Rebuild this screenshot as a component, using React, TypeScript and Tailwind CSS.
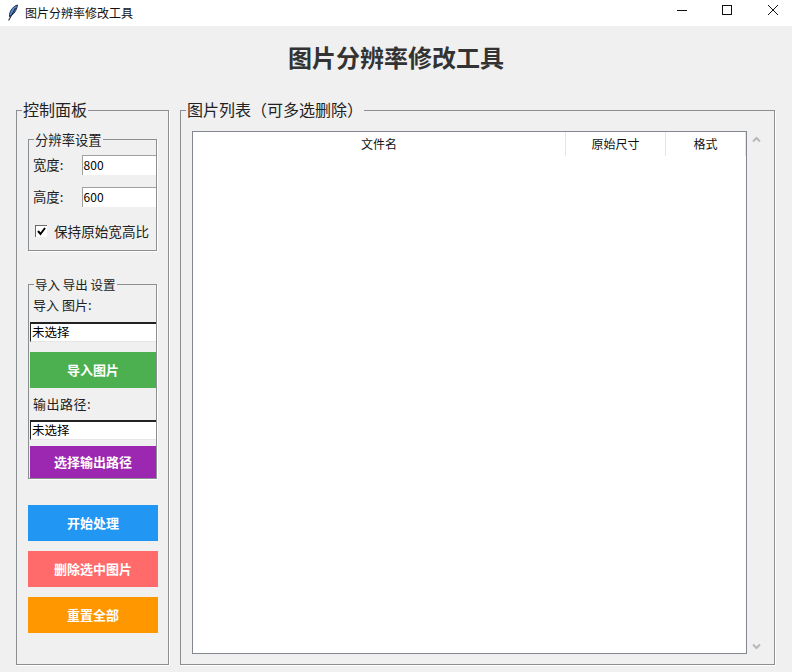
const font = { fontFamily: '"Noto Sans CJK SC", "Liberation Sans", sans-serif' };

function Group({ title, className, legendClass, children }: { title: string; className: string; legendClass: string; children: React.ReactNode }) {
  return (
    <div className={`relative border border-[#8c8f92] shadow-[1px_1px_0_#ffffff] ${className}`}>
      <span className={`absolute whitespace-nowrap bg-[#f0f0f0] px-px ${legendClass}`}>{title}</span>
      {children}
    </div>
  );
}

function Field({ value, className }: { value: string; className: string }) {
  return <div className={`bg-white text-black ${className}`}>{value}</div>;
}

function Action({ label, className }: { label: string; className: string }) {
  return <div className={`flex items-center justify-center font-bold text-[13px] text-white ${className}`}>{label}</div>;
}

export default function App() {
  return (
    <div style={font} className="flex h-[672px] w-[792px] flex-col overflow-hidden bg-[#f0f0f0] text-[#222222]">
      <div className="flex h-[26px] items-center bg-white pl-[7px] text-[12px] text-[#111111]">
        <svg width="12" height="18" viewBox="0 0 12 18" className="mr-[6px]">
          <path d="M10.5 1C6.5 2.2 3.2 6 2.6 10.4L2.4 12.6L4.8 11.2C7.8 9 10 5 10.5 1Z" fill="#5b8fd6" stroke="#1c2a44" strokeWidth="1" />
          <path d="M8.5 4L1.6 16.5" stroke="#1c2a44" strokeWidth="1.1" fill="none" />
        </svg>
        <span>图片分辨率修改工具</span>
        <div className="ml-auto flex h-full items-center">
          <svg width="46" height="26" viewBox="0 0 46 26"><path d="M18 10.5H28" stroke="#111" fill="none" /></svg>
          <svg width="46" height="26" viewBox="0 0 46 26"><rect x="17.5" y="5.5" width="9" height="9" stroke="#111" fill="none" /></svg>
          <svg width="41" height="26" viewBox="0 0 41 26"><path d="M17 5L27 15M27 5L17 15" stroke="#111" fill="none" /></svg>
        </div>
      </div>

      <div className="h-[84px] pt-[13px] text-center text-[24px] font-bold leading-[36px] text-[#333333]">图片分辨率修改工具</div>

      <div className="flex h-[555px] gap-[11px] pl-4">
        <Group title="控制面板" legendClass="left-[5px] top-[-13px] text-[16px] leading-[22px]" className="h-[555px] w-[153px] pl-[11px] pt-[28px]">
          <Group title="分辨率设置" legendClass="left-[5px] top-[-8px] text-[13.33px] leading-[16px]" className="h-[112px] w-[129px] pl-1 pt-[15px] text-[13.33px]">
            <div className="flex h-5 items-center">
              <span className="w-[49px] leading-5">宽度:</span>
              <Field value="800" className="h-5 w-[75px] border-l border-t border-[#a0a0a0] pl-px text-[12px] leading-[17px]" />
            </div>
            <div className="mt-3 flex h-5 items-center">
              <span className="w-[49px] leading-5">高度:</span>
              <Field value="600" className="h-5 w-[75px] border-l border-t border-[#a0a0a0] pl-px text-[12px] leading-[17px]" />
            </div>
            <div className="ml-[2px] mt-[17px] flex h-[14px] items-center gap-[7px]">
              <span className="flex h-3 w-3 items-center justify-center border-l border-t border-[#696969] bg-white">
                <svg width="9" height="9" viewBox="0 0 9 9"><path d="M1 4L3.5 7L8 1" stroke="#000" strokeWidth="2" fill="none" /></svg>
              </span>
              <span className="whitespace-nowrap text-[13.6px] leading-4">保持原始宽高比</span>
            </div>
          </Group>

          <Group title="导入 导出 设置" legendClass="left-[5px] top-[-8px] text-[12.5px] leading-[16px]" className="mt-[33px] h-[195px] w-[129px] pl-px pt-[10px] text-[13px]">
            <div className="pl-[3px] leading-5">导入 图片:</div>
            <Field value="未选择" className="mt-[7px] h-5 w-[126px] border-l border-t-2 border-[#222222] border-b border-b-[#e6e6e6] pl-px text-[12.5px] leading-[16px]" />
            <Action label="导入图片" className="mt-[10px] h-9 w-[126px] bg-[#4caf50]" />
            <div className="mt-[6px] pl-[3px] leading-5 tracking-[0.5px]">输出路径:</div>
            <Field value="未选择" className="mt-[6px] h-5 w-[126px] border-l border-t-2 border-[#222222] border-b border-b-[#e6e6e6] pl-px text-[12.5px] leading-[16px]" />
            <Action label="选择输出路径" className="mt-[6px] h-[32px] w-[126px] bg-[#9c27b0]" />
          </Group>

          <div className="mt-[26px] flex w-[130px] flex-col gap-[10px]">
            <Action label="开始处理" className="h-9 bg-[#2196f3]" />
            <Action label="删除选中图片" className="h-9 bg-[#ff6b6b]" />
            <Action label="重置全部" className="h-9 bg-[#ff9800]" />
          </div>
        </Group>

        <Group title="图片列表（可多选删除）" legendClass="left-[5px] top-[-13px] text-[16px] leading-[22px]" className="flex h-[555px] w-[595px] pl-[11px] pt-[20px]">
          <div className="h-[523px] w-[555px] border border-[#828790] bg-white">
            <div className="flex h-6 text-[12px] leading-[23px] text-[#111111]">
              <div className="w-[373px] border-r border-[#e5e5e5] text-center">文件名</div>
              <div className="w-[100px] border-r border-[#e5e5e5] text-center">原始尺寸</div>
              <div className="w-[80px] border-r border-[#e5e5e5] text-center">格式</div>
            </div>
          </div>
          <div className="flex h-[523px] w-[18px] flex-col items-center justify-between pb-[4px] pl-px pt-[5px]">
            <svg width="9" height="7" viewBox="0 0 9 7"><path d="M1 5.5L4.5 2L8 5.5" stroke="#b8b8b8" strokeWidth="2" fill="none" /></svg>
            <svg width="9" height="7" viewBox="0 0 9 7"><path d="M1 1.5L4.5 5L8 1.5" stroke="#b8b8b8" strokeWidth="2" fill="none" /></svg>
          </div>
        </Group>
      </div>
    </div>
  );
}
